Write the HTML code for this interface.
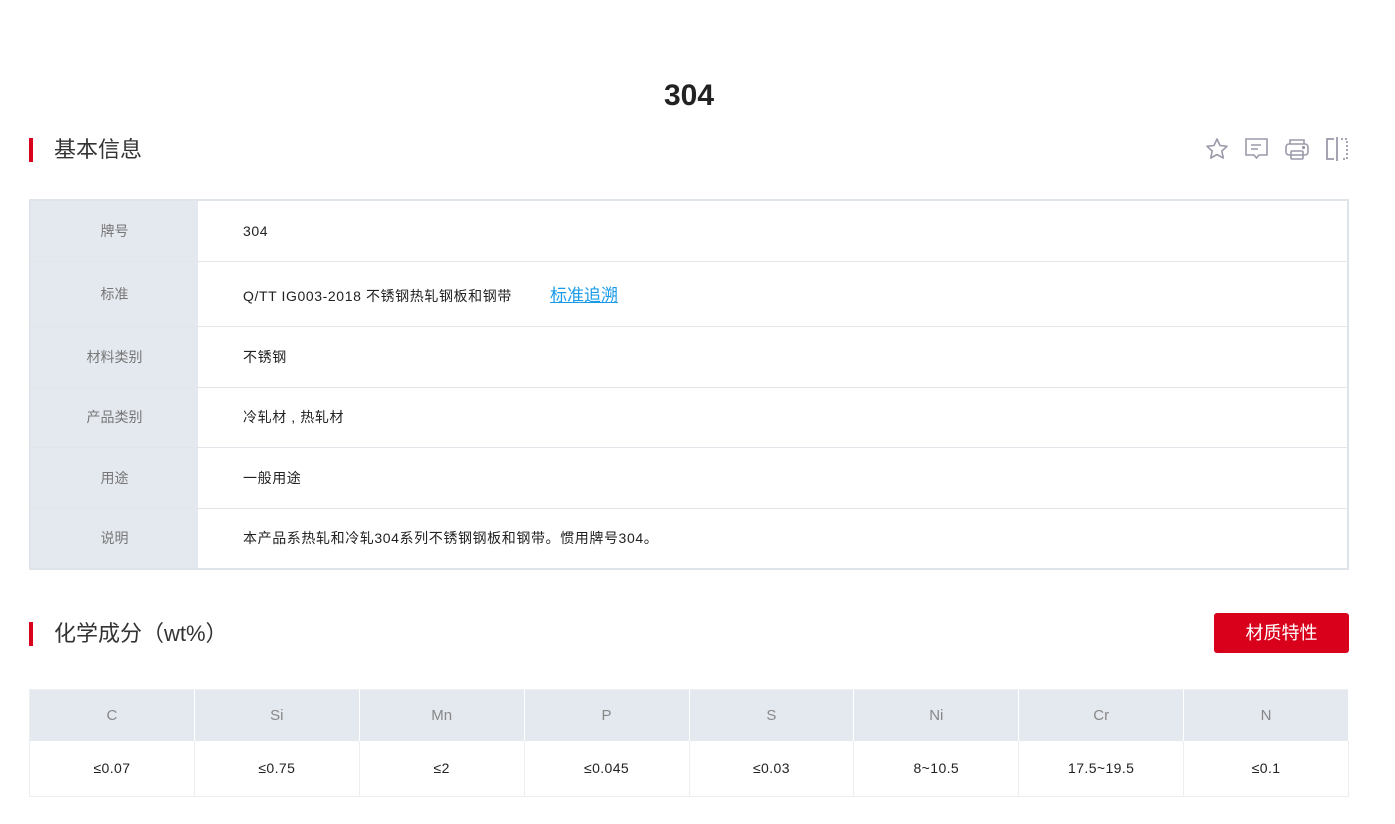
<!DOCTYPE html>
<html><head><meta charset="utf-8"><style>
*{margin:0;padding:0;box-sizing:border-box}
body{width:1395px;height:824px;background:#fff;font-family:"Liberation Sans","Noto Sans CJK SC",sans-serif;color:#333;position:relative;overflow:hidden}
.title{position:absolute;top:79px;left:0;width:1378px;text-align:center;font-size:30px;font-weight:bold;color:#222}
.sec{position:absolute;left:29px;font-size:22px;color:#333;padding-left:25px;line-height:26px}
.sec:before{content:"";position:absolute;left:0;top:1px;width:4px;height:24px;background:#d9001b}
table{border-collapse:collapse;position:absolute;left:29px;width:1320px;table-layout:fixed}
.info{top:199px;border:2px solid #dfe3ea}
.info td{border-bottom:1px solid #e2e5ea;font-size:14px}
.info td.l{width:168px;background:#e4e8ef;color:#777;text-align:center}
.info td.v{padding-left:45px;color:#222;letter-spacing:0.6px}
.chem{top:689px;border:1px solid #eceef2}
.chem th{background:#e4e8ef;color:#888;font-weight:normal;font-size:15px;height:51px;border-right:1px solid #fff}
.chem td{height:56px;text-align:center;font-size:14px;color:#222;border-right:1px solid #eceef2;letter-spacing:0.4px}
.btn{position:absolute;left:1214px;top:613px;width:135px;height:40px;background:#d9001b;color:#fff;border-radius:3px;font-size:18px;text-align:center;line-height:40px}
a{color:#1a9bea;text-decoration:underline;font-size:17px;margin-left:38px;letter-spacing:0}
.icons{position:absolute;top:136px;left:1204px}
.icons svg{position:absolute}
</style></head><body>
<div class="title">304</div>
<div class="sec" style="top:137px">基本信息</div>
<div class="icons">
<svg style="left:0" width="26" height="26" viewBox="0 0 26 26" fill="none" stroke="#9a9aaa" stroke-width="1.6"><path d="M13 3l3 6.5 7 .8-5.2 4.8 1.5 7L13 18.5 6.7 22l1.5-7L3 10.3l7-.8z" stroke-linejoin="round"/></svg>
<svg style="left:40px" width="26" height="26" viewBox="0 0 26 26" fill="none" stroke="#9a9aaa" stroke-width="1.6"><path d="M2 3h21v16H15l-2.5 3-2.5-3H2z"/><path d="M7 9h10M7 13h7"/></svg>
<svg style="left:80px" width="26" height="26" viewBox="0 0 26 26" fill="none" stroke="#9a9aaa" stroke-width="1.6"><path d="M6 8V4h14v4"/><rect x="2" y="8" width="22" height="11" rx="3"/><rect x="7" y="15" width="12" height="8" rx="1"/><circle cx="19.5" cy="11.5" r=".8" fill="#9a9aaa"/></svg>
<svg style="left:120px" width="26" height="26" viewBox="0 0 26 26" fill="none" stroke="#9a9aaa" stroke-width="1.8"><path d="M10 3H3v20h7M13 1v24"/><path d="M17 3h6v20h-6" stroke-dasharray="2 2"/></svg>
</div>
<table class="info">
<tr style="height:61px"><td class="l">牌号</td><td class="v">304</td></tr>
<tr style="height:65px"><td class="l">标准</td><td class="v">Q/TT IG003-2018 不锈钢热轧钢板和钢带<a>标准追溯</a></td></tr>
<tr style="height:61px"><td class="l">材料类别</td><td class="v">不锈钢</td></tr>
<tr style="height:60px"><td class="l">产品类别</td><td class="v">冷轧材 , 热轧材</td></tr>
<tr style="height:61px"><td class="l">用途</td><td class="v">一般用途</td></tr>
<tr style="height:61px"><td class="l">说明</td><td class="v">本产品系热轧和冷轧304系列不锈钢钢板和钢带。惯用牌号304。</td></tr>
</table>
<div class="sec" style="top:621px">化学成分（wt%）</div>
<div class="btn">材质特性</div>
<table class="chem">
<tr><th>C</th><th>Si</th><th>Mn</th><th>P</th><th>S</th><th>Ni</th><th>Cr</th><th>N</th></tr>
<tr><td>≤0.07</td><td>≤0.75</td><td>≤2</td><td>≤0.045</td><td>≤0.03</td><td>8~10.5</td><td>17.5~19.5</td><td>≤0.1</td></tr>
</table>
</body></html>
